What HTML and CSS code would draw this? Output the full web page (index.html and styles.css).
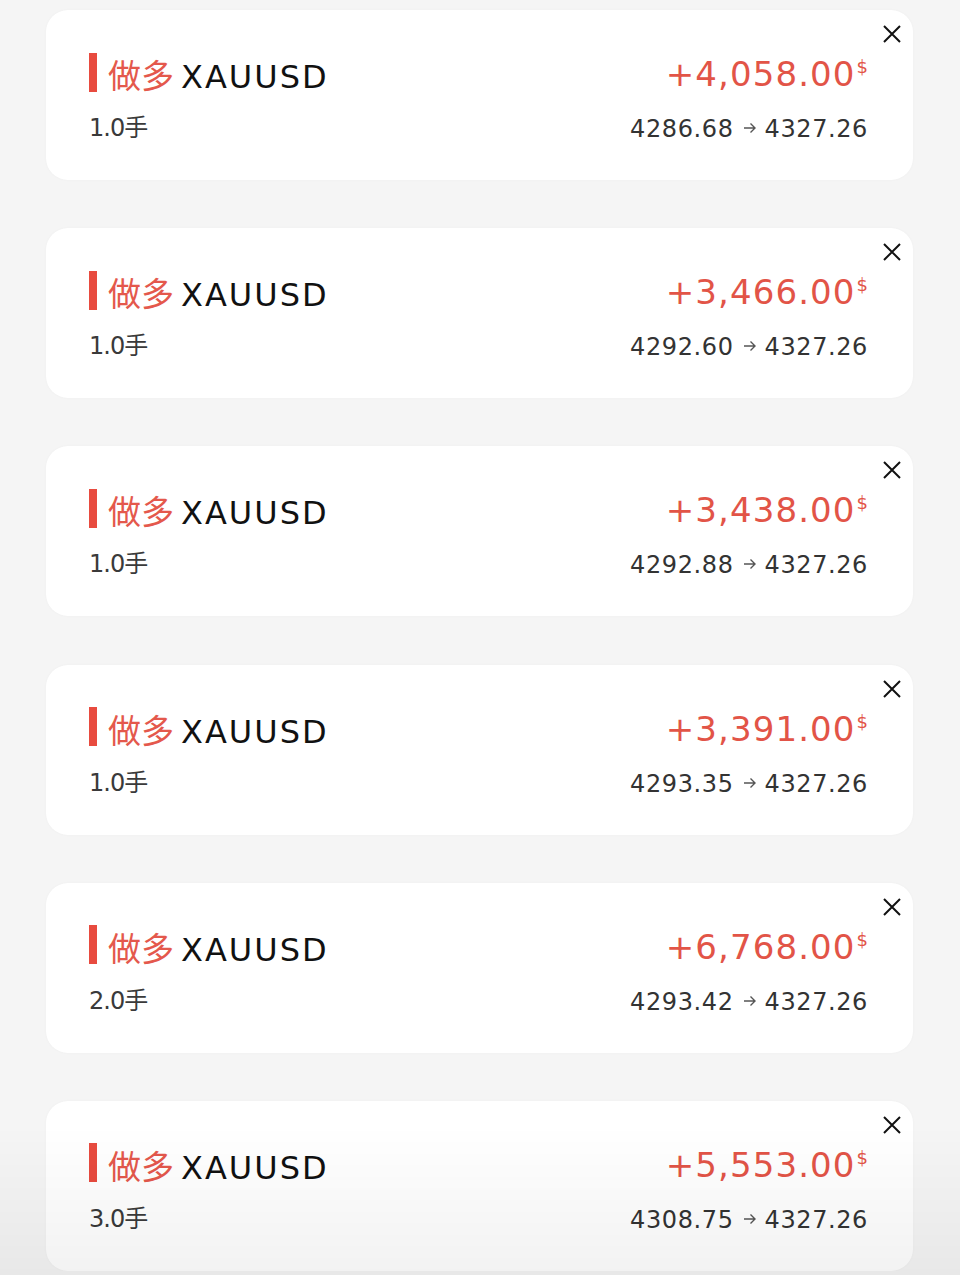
FILE: index.html
```html
<!DOCTYPE html>
<html lang="zh-CN">
<head>
    <meta charset="UTF-8">
    <meta name="viewport" content="width=device-width, initial-scale=1.0">
    <title>持仓</title>
    <link rel="stylesheet" href="styles.css">
</head>
<body>
    <div class="positions">

        <!-- 持仓 1 -->
        <div class="position-card">
            <div class="title-row">
                <span class="side-bar"></span>
                <span class="side">做多</span>
                <span class="symbol">XAUUSD</span>
            </div>
            <div class="profit">+4,058.00<sup class="currency">$</sup></div>
            <div class="lots">1.0手</div>
            <div class="prices">4286.68<svg class="arrow" viewBox="0 0 13 12"><path d="M1 6 H12 M7.5 1.5 L12 6 L7.5 10.5"/></svg>4327.26</div>
            <svg class="close-icon" viewBox="0 0 20 20"><path d="M2 2 L18 18 M18 2 L2 18"/></svg>
        </div>

        <!-- 持仓 2 -->
        <div class="position-card">
            <div class="title-row">
                <span class="side-bar"></span>
                <span class="side">做多</span>
                <span class="symbol">XAUUSD</span>
            </div>
            <div class="profit">+3,466.00<sup class="currency">$</sup></div>
            <div class="lots">1.0手</div>
            <div class="prices">4292.60<svg class="arrow" viewBox="0 0 13 12"><path d="M1 6 H12 M7.5 1.5 L12 6 L7.5 10.5"/></svg>4327.26</div>
            <svg class="close-icon" viewBox="0 0 20 20"><path d="M2 2 L18 18 M18 2 L2 18"/></svg>
        </div>

        <!-- 持仓 3 -->
        <div class="position-card">
            <div class="title-row">
                <span class="side-bar"></span>
                <span class="side">做多</span>
                <span class="symbol">XAUUSD</span>
            </div>
            <div class="profit">+3,438.00<sup class="currency">$</sup></div>
            <div class="lots">1.0手</div>
            <div class="prices">4292.88<svg class="arrow" viewBox="0 0 13 12"><path d="M1 6 H12 M7.5 1.5 L12 6 L7.5 10.5"/></svg>4327.26</div>
            <svg class="close-icon" viewBox="0 0 20 20"><path d="M2 2 L18 18 M18 2 L2 18"/></svg>
        </div>

        <!-- 持仓 4 -->
        <div class="position-card">
            <div class="title-row">
                <span class="side-bar"></span>
                <span class="side">做多</span>
                <span class="symbol">XAUUSD</span>
            </div>
            <div class="profit">+3,391.00<sup class="currency">$</sup></div>
            <div class="lots">1.0手</div>
            <div class="prices">4293.35<svg class="arrow" viewBox="0 0 13 12"><path d="M1 6 H12 M7.5 1.5 L12 6 L7.5 10.5"/></svg>4327.26</div>
            <svg class="close-icon" viewBox="0 0 20 20"><path d="M2 2 L18 18 M18 2 L2 18"/></svg>
        </div>

        <!-- 持仓 5 -->
        <div class="position-card">
            <div class="title-row">
                <span class="side-bar"></span>
                <span class="side">做多</span>
                <span class="symbol">XAUUSD</span>
            </div>
            <div class="profit">+6,768.00<sup class="currency">$</sup></div>
            <div class="lots">2.0手</div>
            <div class="prices">4293.42<svg class="arrow" viewBox="0 0 13 12"><path d="M1 6 H12 M7.5 1.5 L12 6 L7.5 10.5"/></svg>4327.26</div>
            <svg class="close-icon" viewBox="0 0 20 20"><path d="M2 2 L18 18 M18 2 L2 18"/></svg>
        </div>

        <!-- 持仓 6 -->
        <div class="position-card">
            <div class="title-row">
                <span class="side-bar"></span>
                <span class="side">做多</span>
                <span class="symbol">XAUUSD</span>
            </div>
            <div class="profit">+5,553.00<sup class="currency">$</sup></div>
            <div class="lots">3.0手</div>
            <div class="prices">4308.75<svg class="arrow" viewBox="0 0 13 12"><path d="M1 6 H12 M7.5 1.5 L12 6 L7.5 10.5"/></svg>4327.26</div>
            <svg class="close-icon" viewBox="0 0 20 20"><path d="M2 2 L18 18 M18 2 L2 18"/></svg>
        </div>

    </div>

    <!-- voile gris en bas de l'écran -->
    <div class="bottom-shade"></div>
</body>
</html>
```

FILE: styles.css
```css
body {
    margin: 0;
    background-color: #f5f5f5;
    font-family: "DejaVu Sans", "Noto Sans CJK SC", sans-serif;
    color: #111;
    overflow: hidden;
}
.positions {
    display: flex;
    flex-direction: column;
    gap: 48.2px;
    padding: 10px 47px 0 46px;
}
.position-card {
    position: relative;
    height: 170px;
    box-sizing: border-box;
    padding: 47px 45px 0 43px;
    background-color: #fff;
    border-radius: 22px;
    box-shadow: 0 0 3px rgba(0, 0, 0, 0.03);
    display: grid;
    grid-template-columns: 1fr auto;
    grid-template-rows: 40px 30px;
    row-gap: 17px;
}
.title-row {
    display: flex;
    align-items: center;
    height: 40px;
}
.side-bar {
    width: 8px;
    height: 39px;
    background-color: #e84b3f;
    margin-right: 11px;
    margin-bottom: 10px;
}
.side {
    font-family: "Noto Sans CJK SC", sans-serif;
    font-size: 33px;
    line-height: 40px;
    color: #e4584c;
    margin-bottom: 6px;
}
.symbol {
    font-size: 32px;
    line-height: 40px;
    letter-spacing: 2px;
    margin-left: 7px;
    color: #111;
}
.profit {
    font-size: 34px;
    line-height: 40px;
    letter-spacing: 1.1px;
    color: #e25447;
    text-align: right;
    white-space: nowrap;
    margin-top: -3px;
}
.currency {
    font-size: 18px;
    vertical-align: 13px;
    line-height: 0;
    letter-spacing: 0;
    margin-left: 1px;
}
.lots {
    font-size: 24px;
    line-height: 30px;
    color: #3a3a3a;
    letter-spacing: -1px;
    margin-top: -1px;
}
.prices {
    font-size: 24px;
    line-height: 30px;
    color: #333;
    letter-spacing: 0.6px;
    text-align: right;
    white-space: nowrap;
}
.arrow {
    width: 13px;
    height: 12px;
    margin: 0 9px 0 9px;
    vertical-align: 3px;
    fill: none;
    stroke: #555;
    stroke-width: 1.4;
}
.close-icon {
    position: absolute;
    top: 14px;
    right: 11px;
    width: 20px;
    height: 20px;
    fill: none;
    stroke: #111;
    stroke-width: 2;
}
.bottom-shade {
    position: fixed;
    left: 0;
    right: 0;
    bottom: 0;
    height: 150px;
    background: linear-gradient(to bottom, rgba(0, 0, 0, 0), rgba(0, 0, 0, 0.05));
    pointer-events: none;
}
```
